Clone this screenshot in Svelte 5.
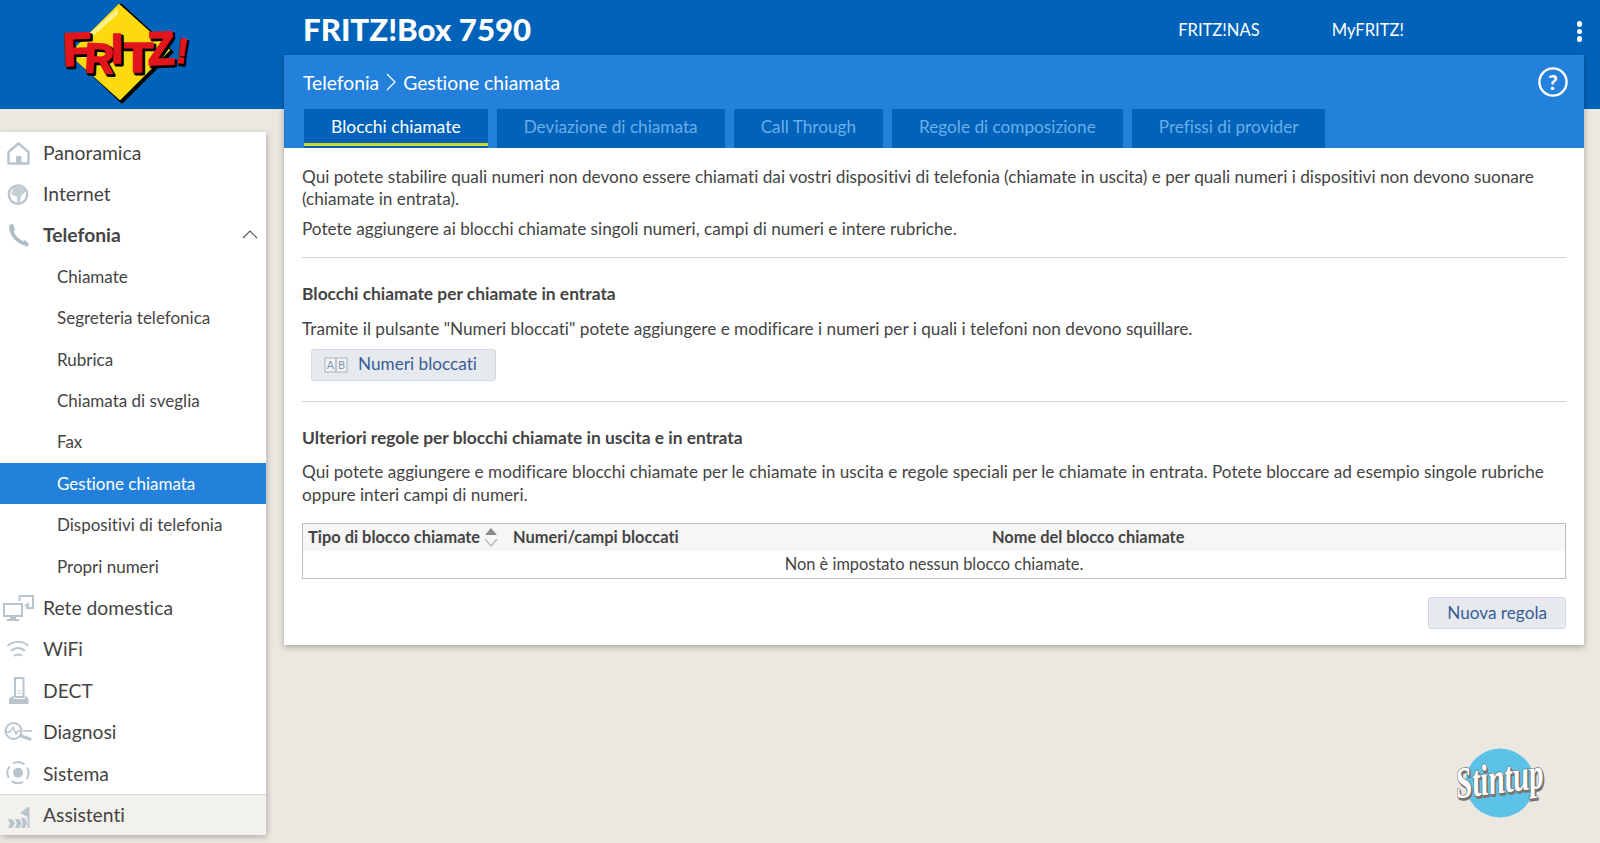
<script>
	const tabs = [
		{ label: 'Blocchi chiamate', active: true },
		{ label: 'Deviazione di chiamata' },
		{ label: 'Call Through' },
		{ label: 'Regole di composizione' },
		{ label: 'Prefissi di provider' }
	];

	const subItems = [
		'Chiamate',
		'Segreteria telefonica',
		'Rubrica',
		'Chiamata di sveglia',
		'Fax',
		'Gestione chiamata',
		'Dispositivi di telefonia',
		'Propri numeri'
	];

	// x, baseline, rotation, size and stretched width of each logo letter
	const logoLetters = [
		{ c: 'F', x: 63, y: 66, r: -2, s: 47, w: 29 },
		{ c: 'R', x: 84, y: 72, r: 3, s: 42, w: 29 },
		{ c: 'T', x: 122, y: 72, r: 0, s: 42, w: 31 },
		{ c: 'I', x: 111, y: 63, r: 0, s: 42, w: 12 },
		{ c: 'Z', x: 148, y: 65, r: -2, s: 47, w: 27 },
		{ c: '!', x: 175, y: 62, r: 8, s: 35, w: 11 }
	];
</script>

{#snippet logo()}
	<svg class="logo" width="284" height="109" viewBox="0 0 284 109">
		<path d="M121 5 L172 52 L122 102 L72 55 Z" fill="#000" stroke="#000" stroke-width="3" stroke-linejoin="round" />
		<path d="M119 5 L169 50 L120 99 L70 54 Z" fill="#fdd90f" stroke="#fdd90f" stroke-width="2" stroke-linejoin="round" />
		<path d="M118 8 L90 33 L94 35 L118 14 Z" fill="#fff28a" />
		{#each logoLetters as l}
			<text class="logo-shadow" x={l.x + 2} y={l.y + 2} font-size={l.s} textLength={l.w} lengthAdjust="spacingAndGlyphs" transform="rotate({l.r} {l.x} {l.y})">{l.c}</text>
			<text class="logo-letter" x={l.x} y={l.y} font-size={l.s} textLength={l.w} lengthAdjust="spacingAndGlyphs" transform="rotate({l.r} {l.x} {l.y})">{l.c}</text>
		{/each}
	</svg>
{/snippet}

{#snippet icon(name)}
	<svg class="nav-icon" width="34" height="34" viewBox="0 0 34 34">
		{#if name === 'home'}
			<path d="M6.5 28.5 V17 L16.5 8.5 L26.5 17 V28.5 Z" fill="none" stroke="#b9c4cc" stroke-width="2.4" stroke-linejoin="round" />
			<rect x="14" y="21" width="5.5" height="8" fill="#b9c4cc" />
		{:else if name === 'globe'}
			<circle cx="16" cy="18.6" r="9.2" fill="none" stroke="#b9c4cc" stroke-width="2.4" />
			<path d="M12 11 L20 10 L24 15 L19 20 L18 27 L15 26 L15 21 L9 18 Z" fill="#c4ced5" />
		{:else if name === 'phone'}
			<path d="M9 10 C9 17 15 25 24 27" fill="none" stroke="#b0bcc5" stroke-width="3.6" stroke-linecap="round" />
			<path d="M7 8 L11 7 L13 13 L10 15 Z M20 26 L23 23 L27 27 L25 30 Z" fill="#b0bcc5" />
		{:else if name === 'network'}
			<path d="M17.5 11 V6 H31 V18 H24" fill="none" stroke="#b9c4cc" stroke-width="2" />
			<path d="M22 15.5 L27 12 V18 Z" fill="#b9c4cc" />
			<rect x="2" y="14" width="18" height="12" fill="#fff" stroke="#b9c4cc" stroke-width="2" />
			<rect x="8" y="26" width="6" height="3" fill="#b9c4cc" />
			<rect x="5" y="29" width="12" height="2" fill="#b9c4cc" />
		{:else if name === 'wifi'}
			<path d="M5.5 15 C11 9.5 21 9.5 26.5 15" fill="none" stroke="#b9c4cc" stroke-width="1.8" />
			<path d="M9 20 C13 16 19 16 23 20" fill="none" stroke="#b9c4cc" stroke-width="1.8" />
			<path d="M12 25 C14 23 18 23 20 25" fill="none" stroke="#b9c4cc" stroke-width="2" />
		{:else if name === 'dect'}
			<rect x="13" y="5" width="8.5" height="19" fill="#fff" stroke="#b9c4cc" stroke-width="2" />
			<path d="M15 18 H20 M15 20.5 H20" stroke="#cdd5db" stroke-width="1" />
			<path d="M7 31 V26 L11.5 22 V26 H23 V22 L26.5 26 V31 Z" fill="#b9c4cc" />
		{:else if name === 'diagnosi'}
			<circle cx="11.5" cy="17" r="8" fill="none" stroke="#b9c4cc" stroke-width="2" />
			<path d="M4.5 18 L8 18 L11 13 L14 20 L16 17 L19 17" fill="none" stroke="#b9c4cc" stroke-width="1.4" />
			<path d="M19 22 L28 25" stroke="#b9c4cc" stroke-width="3.2" stroke-linecap="round" />
			<path d="M21 17 H30" stroke="#b9c4cc" stroke-width="1.6" />
		{:else if name === 'sistema'}
			<circle cx="16" cy="17.7" r="10.5" fill="none" stroke="#b9c4cc" stroke-width="2" stroke-dasharray="12 4.5" transform="rotate(-30 16 17.7)" />
			<circle cx="16" cy="17.7" r="5" fill="#b9c4cc" />
		{:else if name === 'assistenti'}
			<path d="M26.5 9 V30" stroke="#b9c4cc" stroke-width="2" />
			<path d="M26 9 L18 15 L26 19 Z" fill="#b9c4cc" />
			<path d="M6 21 H10 L13 25.5 L10 30 H6 L8 25.5 Z M13 21 H17 L20 25.5 L17 30 H13 L15 25.5 Z M19 20 L23 20 L25 25 L23 30 L19 30 L21 25 Z" fill="#b9c4cc" />
		{/if}
	</svg>
{/snippet}

<div class="page">
	<aside class="left">
		<div class="brand">{@render logo()}</div>
		<nav class="sidebar">
			<a class="top">{@render icon('home')}Panoramica</a>
			<a class="top">{@render icon('globe')}Internet</a>
			<a class="top open">
				{@render icon('phone')}Telefonia
				<svg class="chevron" width="16" height="9" viewBox="0 0 16 9"><path d="M1 8 L8 1 L15 8" fill="none" stroke="#555" stroke-width="1.2" /></svg>
			</a>
			{#each subItems as s}
				<a class="sub" class:current={s === 'Gestione chiamata'}>{s}</a>
			{/each}
			<a class="top">{@render icon('network')}Rete domestica</a>
			<a class="top">{@render icon('wifi')}WiFi</a>
			<a class="top">{@render icon('dect')}DECT</a>
			<a class="top">{@render icon('diagnosi')}Diagnosi</a>
			<a class="top">{@render icon('sistema')}Sistema</a>
			<a class="top wizard">{@render icon('assistenti')}Assistenti</a>
		</nav>
	</aside>

	<main class="right">
		<header class="titlebar">
			<h1>FRITZ!Box 7590</h1>
			<div class="links">
				<a>FRITZ!NAS</a>
				<a>MyFRITZ!</a>
			</div>
			<div class="dots"><i></i><i></i><i></i></div>
		</header>

		<section class="panel">
			<div class="panel-head">
				<div class="crumbs">
					<span>Telefonia</span>
					<svg width="10" height="18" viewBox="0 0 10 18"><path d="M1 1 L9 9 L1 17" fill="none" stroke="#fff" stroke-width="1.2" /></svg>
					<span>Gestione chiamata</span>
				</div>
				<svg class="help" width="30" height="30" viewBox="0 0 30 30">
					<circle cx="15" cy="15" r="13.6" fill="none" stroke="#fff" stroke-width="2.4" />
					<text x="15" y="22.5" text-anchor="middle" font-size="21" font-weight="900" fill="#fff" font-family="Lato, sans-serif">?</text>
				</svg>
			</div>
			<div class="tabs">
				{#each tabs as t}
					<a class="tab" class:active={t.active}>{t.label}</a>
				{/each}
			</div>

			<div class="content">
				<p class="intro">Qui potete stabilire quali numeri non devono essere chiamati dai vostri dispositivi di telefonia (chiamate in uscita) e per quali numeri i dispositivi non devono suonare (chiamate in entrata).</p>
				<p class="intro second">Potete aggiungere ai blocchi chiamate singoli numeri, campi di numeri e intere rubriche.</p>
				<hr />
				<h2>Blocchi chiamate per chiamate in entrata</h2>
				<p class="desc">Tramite il pulsante "Numeri bloccati" potete aggiungere e modificare i numeri per i quali i telefoni non devono squillare.</p>
				<button class="btn book">
					<svg width="24" height="16" viewBox="0 0 24 16">
						<path d="M1 1 H12 V15 H1 Z M12 1 H23 V15 H12 Z" fill="#f2f4f6" stroke="#aab4bd" stroke-width="1" />
						<text x="6.5" y="12" text-anchor="middle" font-size="11" fill="#8b97a2" font-family="Lato, sans-serif">A</text>
						<text x="17.5" y="12" text-anchor="middle" font-size="11" fill="#8b97a2" font-family="Lato, sans-serif">B</text>
					</svg>
					Numeri bloccati
				</button>
				<hr class="lower" />
				<h2>Ulteriori regole per blocchi chiamate in uscita e in entrata</h2>
				<p class="desc two">Qui potete aggiungere e modificare blocchi chiamate per le chiamate in uscita e regole speciali per le chiamate in entrata. Potete bloccare ad esempio singole rubriche oppure interi campi di numeri.</p>

				<div class="table">
					<div class="thead">
						<span class="col-type">Tipo di blocco chiamate
							<svg width="14" height="20" viewBox="0 0 14 20">
								<path d="M7 1 L13 8 H1 Z" fill="#8c8c8c" />
								<path d="M1 12 L7 19 L13 12" fill="none" stroke="#b5b5b5" stroke-width="1.2" />
							</svg>
						</span>
						<span class="col-nums">Numeri/campi bloccati</span>
						<span class="col-name">Nome del blocco chiamate</span>
					</div>
					<div class="empty">Non è impostato nessun blocco chiamate.</div>
				</div>

				<div class="actions"><button class="btn">Nuova regola</button></div>
			</div>
		</section>

		<div class="watermark">
			<svg width="190" height="80" viewBox="-40 0 190 80">
				<circle cx="50" cy="40" r="34.5" fill="#5cc2e8" />
				<text class="stint-shadow" x="7" y="52" textLength="88" lengthAdjust="spacingAndGlyphs" transform="rotate(-7 50 40)">Stintup</text>
				<text class="stint" x="6" y="50" textLength="88" lengthAdjust="spacingAndGlyphs" transform="rotate(-7 50 40)">Stintup</text>
			</svg>
		</div>
	</main>
</div>

<style>
	:global(body) {
		margin: 0;
		background: #ebe8e1;
		font-family: Lato, "Noto Sans", sans-serif;
		font-variant-ligatures: none;
		color: #444;
		overflow: hidden;
	}

	.page {
		display: grid;
		grid-template-columns: 284px 1300px 16px;
		height: 843px;
		background: linear-gradient(#0063b9 109px, #ebe8e1 109px);
	}

	.brand {
		height: 109px;
	}

	.logo {
		display: block;
	}

	.logo-letter,
	.logo-shadow {
		font-family: "Liberation Sans", sans-serif;
		font-weight: 700;
		stroke-linejoin: round;
	}

	.logo-letter {
		fill: #e2141c;
		stroke: #e2141c;
		stroke-width: 1.6;
	}

	.logo-shadow {
		fill: #000;
		stroke: #000;
		stroke-width: 3;
	}

	.sidebar {
		width: 266px;
		margin-top: 22.5px;
		background: #fff;
		box-shadow: 1px 2px 6px rgba(0, 0, 0, 0.25);
		display: flex;
		flex-direction: column;
	}

	.sidebar a {
		height: 41.4px;
		display: flex;
		align-items: center;
		box-sizing: border-box;
		color: #444;
	}

	.top {
		font-size: 19.3px;
		padding-left: 43px;
		position: relative;
	}

	.nav-icon {
		position: absolute;
		left: 2px;
		top: 3px;
	}

	.open {
		font-weight: 700;
	}

	.chevron {
		position: absolute;
		right: 8px;
		top: 16px;
	}

	.sub {
		font-size: 17px;
		padding-left: 57px;
	}

	.sidebar .current {
		background: #2481db;
		color: #fff;
	}

	.wizard {
		background: #f3f1ed;
		border-top: 1px solid #d8d8d4;
	}

	.titlebar {
		height: 55px;
		display: flex;
		align-items: center;
		padding: 3px 0 0 19px;
		box-sizing: border-box;
		color: #fff;
		position: relative;
	}

	h1 {
		margin: 0;
		font-size: 31.2px;
		font-weight: 900;
		flex: 1;
	}

	.links {
		display: flex;
		gap: 72px;
		font-size: 16.6px;
		margin-right: 180px;
		padding-top: 2px;
	}

	.dots {
		position: absolute;
		right: 2px;
		top: 21px;
		display: flex;
		flex-direction: column;
		gap: 2px;
	}

	.dots i {
		width: 5.5px;
		height: 5.5px;
		background: #fff;
		border-radius: 50%;
	}

	.panel {
		background: #2481db;
		box-shadow: 0 2px 6px rgba(0, 0, 0, 0.3);
	}

	.panel-head {
		height: 54px;
		display: flex;
		align-items: center;
		justify-content: space-between;
		padding: 0 16px 0 19px;
	}

	.crumbs {
		display: flex;
		align-items: center;
		gap: 7px;
		color: #fff;
		font-size: 19.3px;
	}

	.tabs {
		display: flex;
		gap: 9px;
		padding-left: 20px;
		height: 39px;
	}

	.tab {
		background: #0063b9;
		color: #6aaeea;
		font-size: 17.2px;
		padding: 0 27px 4px;
		display: flex;
		align-items: center;
		box-sizing: border-box;
	}

	.tab.active {
		color: #fff;
		font-size: 17.5px;
		box-shadow: inset 0 -2px 0 #0063b9, inset 0 -5px 0 #c9dc2b;
	}

	.content {
		background: #fff;
		padding: 18px 18px 16px 18px;
		font-size: 17.2px;
		line-height: 22.4px;
	}

	p {
		margin: 0;
	}

	.second {
		margin-top: 7px;
	}

	hr {
		border: 0;
		border-top: 1px solid #d4d4d4;
		margin: 17px 0 25px;
	}

	h2 {
		margin: 0 0 12.5px;
		font-size: 17.4px;
		font-weight: 700;
	}

	.btn {
		font: inherit;
		color: #3a5c96;
		background: #e6eaef;
		border: 1px solid #d4d9df;
		border-radius: 3px;
		height: 32px;
		padding: 0 18px;
		display: inline-flex;
		align-items: center;
		gap: 10px;
	}

	.book {
		margin: 8px 0 0 9px;
		padding: 0 18px 0 12px;
		height: 32px;
	}

	.lower {
		margin-top: 20px;
	}

	.two {
		margin-bottom: 17px;
	}

	.table {
		border: 1px solid #bdbdbd;
		height: 56px;
		box-sizing: border-box;
		font-size: 16.4px;
	}

	.thead {
		height: 27px;
		background: #f6f6f6;
		display: flex;
		align-items: center;
		font-weight: 700;
		position: relative;
		padding-bottom: 2px;
		box-sizing: border-box;
	}

	.col-type {
		padding-left: 5px;
		width: 205px;
		display: flex;
		align-items: center;
		gap: 4px;
	}

	.col-name {
		position: absolute;
		left: 689px;
	}

	.empty {
		text-align: center;
		height: 27px;
		line-height: 26px;
	}

	.actions {
		display: flex;
		justify-content: flex-end;
		margin-top: 18px;
	}

	.watermark {
		position: absolute;
		left: 1410px;
		top: 743px;
	}

	.stint,
	.stint-shadow {
		font-family: "Liberation Serif", serif;
		font-style: italic;
		font-weight: 700;
		font-size: 44px;
	}

	.stint {
		fill: #fff;
		stroke: #6e6e6e;
		stroke-width: 1.4;
		paint-order: stroke;
	}

	.stint-shadow {
		fill: #7a766f;
		stroke: #7a766f;
		stroke-width: 1.6;
	}
</style>
